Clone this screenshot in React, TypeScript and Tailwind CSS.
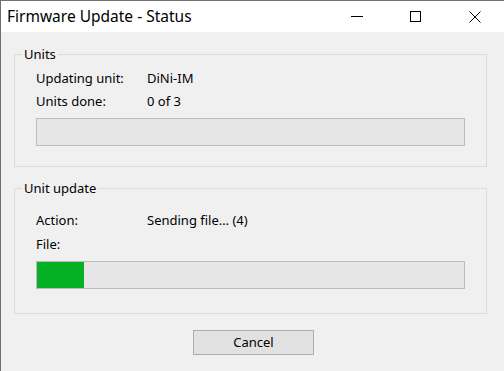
const Row = ({ label, value }: { label: string; value?: string }) => (
  <div className="flex h-[18px] items-center">
    <span className="w-[111px] shrink-0">{label}</span>
    {value && <span>{value}</span>}
  </div>
);

const ProgressBar = ({ percent }: { percent: number }) => (
  <div className="h-[28px] w-full border border-[#bcbcbc] bg-[#e6e6e6]">
    <div className="h-full bg-[#06b025]" style={{ width: `${percent}%` }} />
  </div>
);

const GroupBox = ({
  title,
  className,
  children,
}: {
  title: string;
  className?: string;
  children: React.ReactNode;
}) => (
  <div className={`relative border border-[#dcdcdc] px-[21px] ${className ?? ""}`}>
    <span className="absolute -top-[10px] left-[7px] bg-[#f0f0f0] px-[2px] leading-[18px]">
      {title}
    </span>
    {children}
  </div>
);

export default function App() {
  return (
    <div
      className="flex h-[371px] w-[504px] flex-col overflow-hidden border-l border-t border-[#6f6f6f] bg-[#f0f0f0] text-[13px] text-black"
      style={{ fontFamily: '"Noto Sans", "Open Sans", sans-serif' }}
    >
      {/* title bar */}
      <div className="flex h-[31px] shrink-0 items-center bg-white">
        <span className="pl-[6px] text-[15.5px]">Firmware Update - Status</span>
        <div className="ml-auto flex h-full">
          <div className="flex w-[59px] items-center justify-center">
            <div className="h-px w-[12px] bg-black" />
          </div>
          <div className="flex w-[59px] items-center justify-center">
            <div className="h-[11px] w-[11px] border border-black" />
          </div>
          <div className="flex w-[59px] items-center justify-center">
            <svg width="12" height="12" viewBox="0 0 12 12">
              <path d="M0.5 0.5 L11.5 11.5 M11.5 0.5 L0.5 11.5" stroke="black" strokeWidth="1" />
            </svg>
          </div>
        </div>
      </div>

      {/* client area */}
      <div className="flex flex-1 flex-col pl-[13px] pr-[17px]">
        <GroupBox title="Units" className="mt-[22px] pb-[20px] pt-[15px]">
          <div className="flex flex-col gap-[5px]">
            <Row label="Updating unit:" value="DiNi-IM" />
            <Row label="Units done:" value="0 of 3" />
          </div>
          <div className="mt-[7px]">
            <ProgressBar percent={0} />
          </div>
        </GroupBox>

        <GroupBox title="Unit update" className="mt-[21px] pb-[24px] pt-[23px]">
          <div className="flex flex-col gap-[6px]">
            <Row label="Action:" value="Sending file… (4)" />
            <Row label="File:" />
          </div>
          <div className="mt-[7px]">
            <ProgressBar percent={11} />
          </div>
        </GroupBox>

        <div className="mt-[16px] flex justify-center pl-[6px]">
          <button className="h-[25px] w-[121px] border border-[#adadad] bg-[#e1e1e1] text-[13px]">
            Cancel
          </button>
        </div>
      </div>
    </div>
  );
}
